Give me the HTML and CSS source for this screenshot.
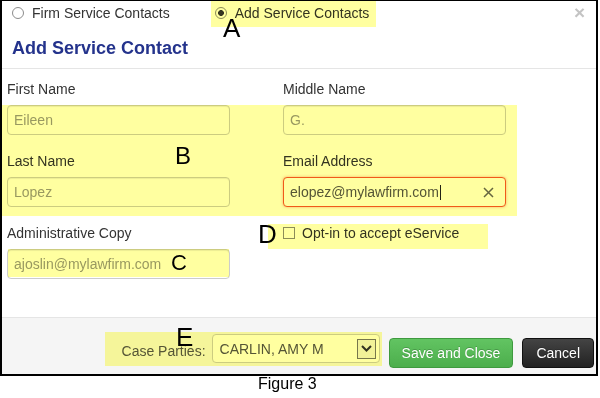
FILE: index.html
```html
<!DOCTYPE html>
<html lang="en">
<head>
  <meta charset="UTF-8" />
  <title>Add Service Contact - Figure 3</title>
  <link rel="stylesheet" href="styles.css">
</head>
<body>
  <div class="figure">
    <div class="modal">
      <div class="modal-header">
        <div class="tabs">
          <label class="radio"><span class="radio-dot"></span>Firm Service Contacts</label>
          <label class="radio radio-second"><span class="radio-dot checked"></span>Add Service Contacts</label>
          <span class="close">&times;</span>
        </div>
        <h3 class="title">Add Service Contact</h3>
      </div>

      <div class="modal-body">
        <div class="form-grid">
          <div class="field">
            <label>First Name</label>
            <input class="input" type="text" value="Eileen">
          </div>
          <div class="field">
            <label>Middle Name</label>
            <input class="input" type="text" value="G.">
          </div>
          <div class="field">
            <label>Last Name</label>
            <input class="input" type="text" value="Lopez">
          </div>
          <div class="field">
            <label>Email Address</label>
            <div class="input input-error">
              <span class="value">elopez@mylawfirm.com</span><span class="caret"></span>
              <svg class="clear" width="11" height="11" viewBox="0 0 11 11">
                <path d="M1 1 L10 10 M10 1 L1 10" stroke="#666" stroke-width="1.5" fill="none"/>
              </svg>
            </div>
          </div>
          <div class="field">
            <label>Administrative Copy</label>
            <input class="input" type="text" value="ajoslin@mylawfirm.com">
          </div>
          <div class="field">
            <label class="check"><span class="checkbox"></span>Opt-in to accept eService</label>
          </div>
        </div>
      </div>

      <div class="modal-footer">
        <span class="parties-label">Case Parties:</span>
        <div class="select">
          <span>CARLIN, AMY M</span>
          <span class="select-arrow">
            <svg width="11" height="7" viewBox="0 0 11 7">
              <path d="M1 1 L5.5 5.5 L10 1" stroke="#333" stroke-width="2" fill="none"/>
            </svg>
          </span>
        </div>
        <button class="btn btn-success">Save and Close</button>
        <button class="btn btn-dark">Cancel</button>
      </div>
    </div>
    <p class="caption">Figure 3</p>

    <!-- callout annotations -->
    <div class="hl hl-a"></div>
    <div class="hl hl-b"></div>
    <div class="hl hl-c"></div>
    <div class="hl hl-d"></div>
    <div class="hl hl-e"></div>
    <span class="mark mark-a">A</span>
    <span class="mark mark-b">B</span>
    <span class="mark mark-c">C</span>
    <span class="mark mark-d">D</span>
    <span class="mark mark-e">E</span>
  </div>
</body>
</html>
```

FILE: styles.css
```css
body {
  margin: 0;
  background: #fff;
  font-family: "Liberation Sans", Arial, sans-serif;
  font-size: 14px;
  color: #333;
}

.figure {
  position: relative;
  width: 600px;
}

.modal {
  width: 598px;
  height: 376px;
  box-sizing: border-box;
  border: solid #000;
  border-width: 1px 2px 2px 2px;
  display: flex;
  flex-direction: column;
  background: #fff;
}

/* header */
.modal-header {
  padding: 0 10px 9px 10px;
  border-bottom: 1px solid #e5e5e5;
}

.tabs {
  display: flex;
  align-items: center;
  height: 24px;
  line-height: 24px;
}

.radio {
  display: flex;
  align-items: center;
  gap: 8px;
  color: #333;
}

.radio-second {
  margin-left: 45px;
}

.radio-dot {
  width: 12px;
  height: 12px;
  box-sizing: border-box;
  border: 1px solid #8c8c8c;
  border-radius: 50%;
  background: #fff;
}

.radio-dot.checked {
  background: radial-gradient(circle, #333 0 2.6px, #fff 3.2px);
}

.close {
  margin-left: auto;
  margin-right: 1px;
  font-size: 19px;
  font-weight: bold;
  color: #c4c4c4;
}

.title {
  margin: 12px 0 0 0;
  font-size: 18px;
  line-height: 22px;
  font-weight: bold;
  color: #24338c;
}

/* body */
.modal-body {
  padding: 10px 5px 38px 5px;
}

.form-grid {
  display: grid;
  grid-template-columns: 223px 223px;
  column-gap: 53px;
  row-gap: 16px;
}

.field label {
  display: block;
  line-height: 20px;
  margin-bottom: 6px;
  color: #333;
}

.input {
  display: block;
  width: 223px;
  height: 30px;
  box-sizing: border-box;
  margin: 0;
  padding: 0 6px;
  border: 1px solid #ccc;
  border-radius: 4px;
  box-shadow: inset 0 1px 1px rgba(0, 0, 0, 0.075);
  background: #fff;
  font-family: "Liberation Sans", Arial, sans-serif;
  font-size: 14px;
  color: #999;
}

.input-error {
  display: flex;
  align-items: center;
  border-color: #f05a28;
  box-shadow: 0 0 3px rgba(240, 90, 40, 0.5);
  color: #555;
}

.caret {
  width: 1px;
  height: 15px;
  margin-left: 1px;
  background: #222;
}

.clear {
  margin-left: auto;
  margin-right: 5px;
}

.field .check {
  display: flex;
  align-items: center;
  gap: 7px;
  margin: 0;
}

.checkbox {
  width: 12px;
  height: 12px;
  box-sizing: border-box;
  border: 1px solid #8c8c8c;
  background: #fff;
}

/* footer */
.modal-footer {
  flex: 1;
  display: flex;
  align-items: flex-start;
  justify-content: flex-end;
  padding: 16px 2px 0 0;
  border-top: 1px solid #e5e5e5;
  background: #f5f5f5;
}

.parties-label {
  line-height: 20px;
  margin: 7px 6px 0 0;
  color: #555;
}

.select {
  display: flex;
  align-items: center;
  width: 168px;
  height: 29px;
  box-sizing: border-box;
  padding: 0 3px 0 7px;
  border: 1px solid #ccc;
  border-radius: 4px;
  background: #fff;
  color: #555;
}

.select-arrow {
  margin-left: auto;
  width: 19px;
  height: 20px;
  box-sizing: border-box;
  border: 1px solid #777;
  display: flex;
  align-items: center;
  justify-content: center;
  background: #f2f2f2;
}

.btn {
  height: 30px;
  margin: 4px 0 0 9px;
  padding: 0 12px;
  border-radius: 4px;
  font-family: "Liberation Sans", Arial, sans-serif;
  font-size: 14px;
  color: #fff;
  text-shadow: 0 -1px 0 rgba(0, 0, 0, 0.2);
}

.btn-success {
  border: 1px solid #3e9a3e;
  background: linear-gradient(#62c462, #4cae4c);
}

.btn-dark {
  padding: 0 13px;
  border: 1px solid #111;
  background: linear-gradient(#444, #222);
}

.caption {
  margin: 0;
  padding-left: 258px;
  font-size: 16px;
  line-height: 16px;
  color: #000;
}

/* annotations laid over the screenshot */
.hl {
  position: absolute;
  background: #ffffa0;
  mix-blend-mode: multiply;
}

.hl-a { left: 211px; top: 1px; width: 165px; height: 26px; }
.hl-b { left: 0; top: 105px; width: 517px; height: 111px; }
.hl-c { left: 8px; top: 249px; width: 221px; height: 28px; }
.hl-d { left: 268px; top: 224px; width: 220px; height: 25px; }
.hl-e { left: 105px; top: 332px; width: 277px; height: 34px; }

.mark {
  position: absolute;
  line-height: 1;
  color: #000;
}

.mark-a { left: 223px; top: 15px; font-size: 26px; }
.mark-b { left: 175px; top: 144px; font-size: 24px; }
.mark-c { left: 171px; top: 252px; font-size: 22px; }
.mark-d { left: 258px; top: 221px; font-size: 26px; }
.mark-e { left: 176px; top: 324px; font-size: 26px; }
```
